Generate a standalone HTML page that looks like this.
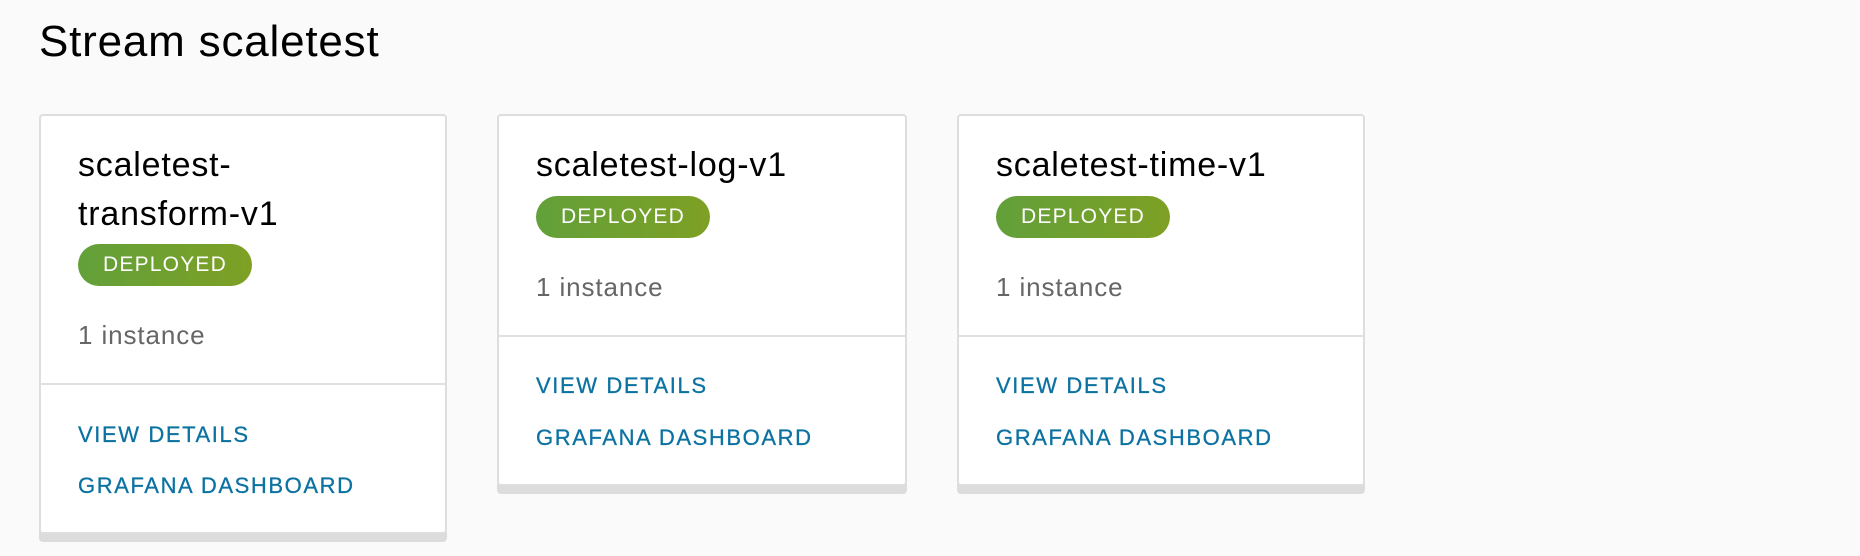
<!DOCTYPE html>
<html><head><meta charset="utf-8"><style>
*{margin:0;padding:0;box-sizing:border-box}
body{width:1860px;height:556px;background:#fafafa;font-family:"Liberation Sans",sans-serif;position:relative;overflow:hidden}
.t{position:absolute;left:39px;top:20px;font-size:44px;line-height:1;letter-spacing:0.8px;color:#000}
.card{position:absolute;top:114px;background:#fff;border:2px solid #dedede;border-radius:4px;box-shadow:0 8px 0 #dcdcdc}
.card>*{position:absolute;left:37px;white-space:nowrap}
.name{font-size:34px;line-height:49px;letter-spacing:0.8px;color:#000;top:25px}
.badge{width:174px;height:42px;border-radius:21px;background:linear-gradient(90deg,#62a03a,#7ea024);color:#fff;font-size:21px;letter-spacing:1.2px;text-align:center;line-height:42px}
.inst{font-size:26px;line-height:1;letter-spacing:0.9px;color:#666}
.div{left:0!important;right:0;height:2px;background:#e0e0e0}
.lk{font-size:22px;line-height:1;letter-spacing:1.6px;color:#0c72a1;-webkit-text-stroke:0.3px #0c72a1}
</style></head><body>
<div class="t">Stream scaletest</div>

<div class="card" style="left:39px;width:408px;height:420px">
<div class="name">scaletest-<br>transform-v1</div>
<div class="badge" style="top:128px">DEPLOYED</div>
<div class="inst" style="top:206px">1 instance</div>
<div class="div" style="top:267px"></div>
<div class="lk" style="top:308px">VIEW DETAILS</div>
<div class="lk" style="top:359px">GRAFANA DASHBOARD</div>
</div>

<div class="card" style="left:497px;width:410px;height:372px">
<div class="name">scaletest-log-v1</div>
<div class="badge" style="top:80px">DEPLOYED</div>
<div class="inst" style="top:158px">1 instance</div>
<div class="div" style="top:219px"></div>
<div class="lk" style="top:259px">VIEW DETAILS</div>
<div class="lk" style="top:311px">GRAFANA DASHBOARD</div>
</div>

<div class="card" style="left:957px;width:408px;height:372px">
<div class="name">scaletest-time-v1</div>
<div class="badge" style="top:80px">DEPLOYED</div>
<div class="inst" style="top:158px">1 instance</div>
<div class="div" style="top:219px"></div>
<div class="lk" style="top:259px">VIEW DETAILS</div>
<div class="lk" style="top:311px">GRAFANA DASHBOARD</div>
</div>
</body></html>
